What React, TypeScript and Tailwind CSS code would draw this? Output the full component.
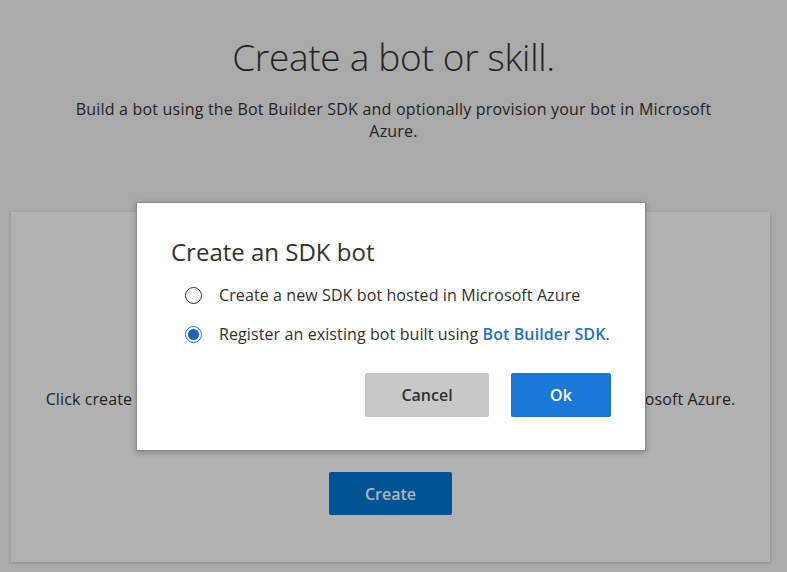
import { useState } from "react";

const font = { fontFamily: '"Segoe UI", "Open Sans", "Noto Sans", sans-serif' };

const Radio = ({ checked, onClick }: { checked: boolean; onClick: () => void }) => (
  <span
    onClick={onClick}
    className={`flex h-[17px] w-[17px] shrink-0 items-center justify-center rounded-full border ${
      checked ? "border-[#1a73c8]" : "border-[#323130]"
    }`}
  >
    {checked && <span className="h-[11px] w-[11px] rounded-full bg-[#1a64b4]" />}
  </span>
);

export default function App() {
  const [choice, setChoice] = useState<"new" | "existing">("existing");

  return (
    <div className="relative h-[572px] overflow-hidden bg-[#f4f4f4] text-[#323130]" style={font}>
      {/* page */}
      <div className="flex flex-col items-center pt-[33px]">
        <h1 className="text-[37px] font-light leading-[48px] tracking-[-0.3px]">Create a bot or skill.</h1>
        <p className="mt-[17px] w-[660px] text-center text-[16px] leading-[22px] tracking-[0.2px]">
          Build a bot using the Bot Builder SDK and optionally provision your bot in Microsoft Azure.
        </p>
      </div>
      <div className="ml-[11px] mr-[17px] mt-[70px] flex h-[350px] flex-col items-center bg-white pt-[176px] shadow-[0_1px_3px_rgba(0,0,0,0.2)]">
        <p className="text-[16px] leading-[22px] tracking-[0.1px]">
          Click create to start building a new bot and optionally provision your bot in Microsoft Azure.
        </p>
        <button className="mt-[62px] h-[43px] w-[123px] shrink-0 rounded-[2px] bg-[#0078d4] text-[16px] font-semibold text-white">
          Create
        </button>
      </div>

      {/* overlay */}
      <div className="absolute inset-0 bg-black/30" />

      {/* dialog */}
      <div className="absolute left-[136px] top-[202px] flex h-[249px] w-[510px] flex-col border border-[#8a8a8a] bg-white px-[34px] pt-[32px] shadow-[0_2px_6px_rgba(0,0,0,0.25)]">
        <h2 className="text-[24px] leading-[34px] text-[#323130]">Create an SDK bot</h2>
        <div className="mt-[15px] flex flex-col gap-[17px] pl-[14px] text-[16px] tracking-[0.1px] text-[#323130]">
          <label className="flex h-[22px] items-center gap-[17px]" onClick={() => setChoice("new")}>
            <Radio checked={choice === "new"} onClick={() => setChoice("new")} />
            <span>Create a new SDK bot hosted in Microsoft Azure</span>
          </label>
          <label className="flex h-[22px] items-center gap-[17px]" onClick={() => setChoice("existing")}>
            <Radio checked={choice === "existing"} onClick={() => setChoice("existing")} />
            <span>
              Register an existing bot built using{" "}
              <a className="font-semibold text-[#1a73c8]">Bot Builder SDK</a>.
            </span>
          </label>
        </div>
        <div className="mt-[28px] flex justify-end gap-[22px]">
          <button className="h-[44px] w-[124px] rounded-[2px] bg-[#c8c8c8] text-[16px] font-semibold text-[#323130]">
            Cancel
          </button>
          <button className="h-[44px] w-[100px] rounded-[2px] bg-[#1a78d8] text-[16px] font-semibold text-white">
            Ok
          </button>
        </div>
      </div>
    </div>
  );
}
